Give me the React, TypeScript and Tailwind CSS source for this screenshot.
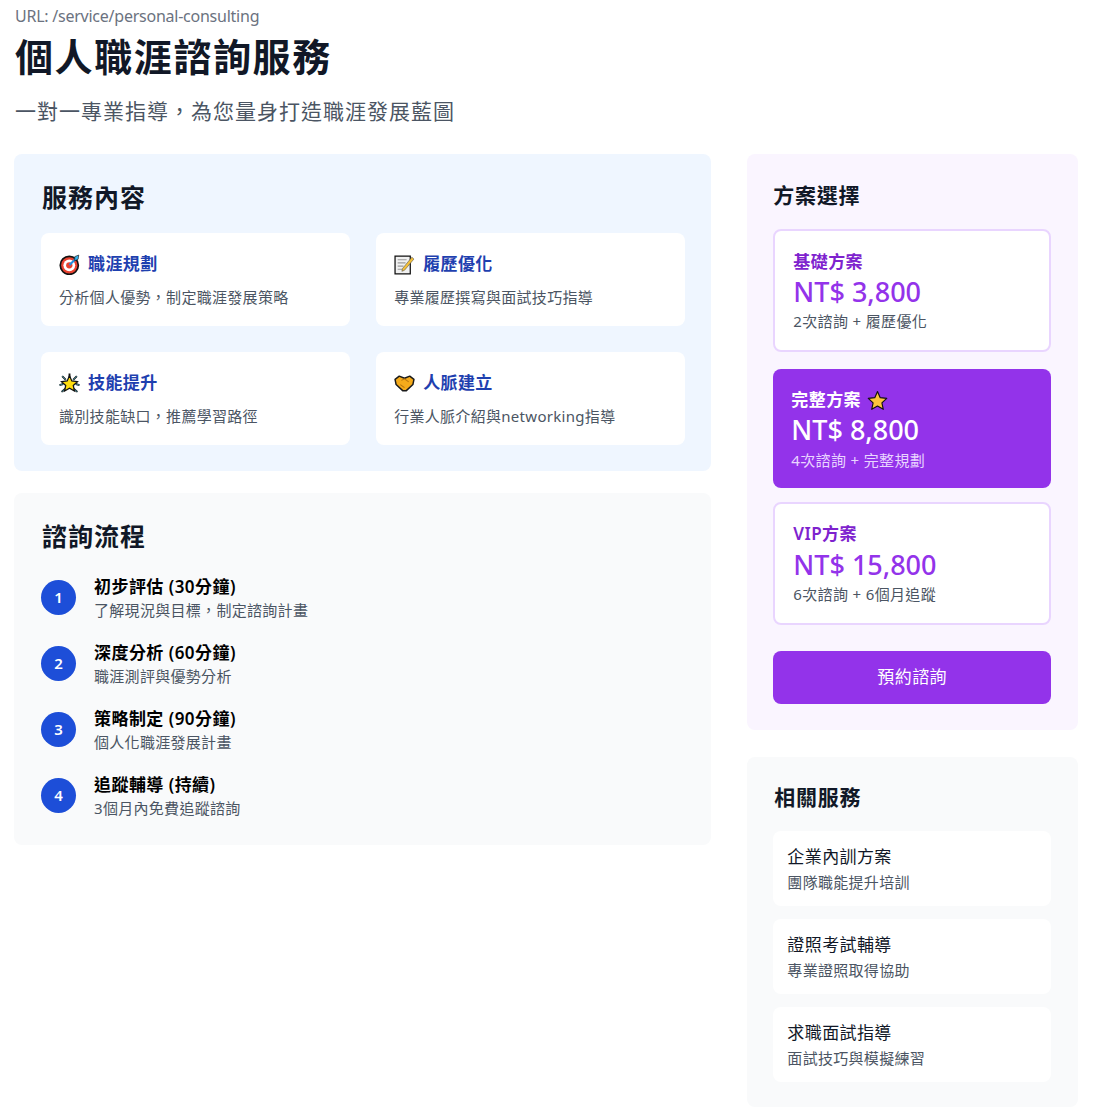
const services = [
  { icon: "target", title: "職涯規劃", desc: "分析個人優勢，制定職涯發展策略" },
  { icon: "memo", title: "履歷優化", desc: "專業履歷撰寫與面試技巧指導" },
  { icon: "star", title: "技能提升", desc: "識別技能缺口，推薦學習路徑" },
  { icon: "hands", title: "人脈建立", desc: "行業人脈介紹與networking指導" },
];

const steps = [
  { title: "初步評估 (30分鐘)", desc: "了解現況與目標，制定諮詢計畫" },
  { title: "深度分析 (60分鐘)", desc: "職涯測評與優勢分析" },
  { title: "策略制定 (90分鐘)", desc: "個人化職涯發展計畫" },
  { title: "追蹤輔導 (持續)", desc: "3個月內免費追蹤諮詢" },
];

const related = [
  { title: "企業內訓方案", desc: "團隊職能提升培訓" },
  { title: "證照考試輔導", desc: "專業證照取得協助" },
  { title: "求職面試指導", desc: "面試技巧與模擬練習" },
];

const Emoji = ({ name }: { name: string }) => {
  if (name === "target")
    return (
      <svg viewBox="0 0 20 20" className="w-[21px] h-[21px] shrink-0">
        <circle cx="9.8" cy="10.8" r="8.6" fill="#e8412f" stroke="#111" strokeWidth="1.6" />
        <circle cx="9.8" cy="10.8" r="5.6" fill="#fff" />
        <circle cx="9.8" cy="10.8" r="3" fill="#e8412f" />
        <path d="M10 10.5 17 3.5" stroke="#1d8fe0" strokeWidth="2" />
        <path d="M15 2.5 18.8 1 18.2 5 15 6.5Z" fill="#35b4f0" stroke="#111" strokeWidth="0.6" />
      </svg>
    );
  if (name === "memo")
    return (
      <svg viewBox="0 0 20 20" className="w-[21px] h-[21px] shrink-0">
        <path d="M1 2H15.5V19H1Z" fill="#f1f1f1" stroke="#111" strokeWidth="1.2" />
        <path d="M3.5 5.5H12M3.5 8.5H11M3.5 11.5H9M3.5 14.5H8" stroke="#9a9a9a" strokeWidth="1.1" />
        <path d="M8 14 17 3 19 4.8 10 15.5 7.5 16.5Z" fill="#f4c03a" stroke="#444" strokeWidth="0.5" />
      </svg>
    );
  if (name === "star")
    return (
      <svg viewBox="0 0 20 20" className="w-[21px] h-[21px] shrink-0">
        <path
          d="M10 0.5V5M3 3 6.5 6.5M17 3 13.5 6.5M0.5 11.5 4 10.5M19.5 11.5 16 10.5M2.5 18 6 15M17.5 18 14 15"
          stroke="#111"
          strokeWidth="1.8"
          fill="none"
        />
        <path d="M3 3 6.5 6.5M17 3 13.5 6.5M0.5 11.5 4 10.5M19.5 11.5 16 10.5M2.5 18 6 15M17.5 18 14 15" stroke="#3f8fa0" strokeWidth="0.8" />
        <path d="M10 2.5 12.2 7.6 17.6 8.2 13.6 11.9 14.7 17.2 10 14.5 5.3 17.2 6.4 11.9 2.4 8.2 7.8 7.6Z" fill="#ffdd0f" stroke="#111" strokeWidth="1.2" />
      </svg>
    );
  return (
    <svg viewBox="0 0 20 20" className="w-[21px] h-[21px] shrink-0">
      <path
        d="M1 6 5 3 10 5 15 3 19 6 18 11 11.5 17 8.5 17 2 11Z"
        fill="#f5ab1b"
        stroke="#1a1a1a"
        strokeWidth="1.4"
        strokeLinejoin="round"
      />
      <path d="M7 7 10 5.5 14 8.5M6 11 10 14" stroke="#b9770e" strokeWidth="1" fill="none" />
    </svg>
  );
};

const StarIcon = () => (
  <svg viewBox="0 0 20 20" className="w-[21px] h-[21px] shrink-0">
    <path
      d="M10 1.5 12.6 7.3 18.8 8 14.2 12.2 15.5 18.4 10 15.2 4.5 18.4 5.8 12.2 1.2 8 7.4 7.3Z"
      fill="#fdc33c"
      stroke="#111"
      strokeWidth="1.1"
      strokeLinejoin="round"
    />
  </svg>
);

const App = () => {
  return (
    <div className="pl-[14px] pr-[15px] pt-[7px] bg-white text-[#111827] font-['Noto_Sans','Noto_Sans_CJK_TC',sans-serif]">
      <p className="pl-px text-base leading-[18px] tracking-[-0.015em] text-[#6b7280]">URL: /service/personal-consulting</p>
      <h1 className="mt-[11px] pl-[1px] text-[38px] leading-[40px] font-bold tracking-[1.6px]">個人職涯諮詢服務</h1>
      <p className="mt-[21px] pl-px text-[21px] leading-[28px] tracking-[1px] text-[#4b5563]">一對一專業指導，為您量身打造職涯發展藍圖</p>

      <div className="mt-[29px] grid grid-cols-3 gap-9">
        <div className="col-span-2 flex flex-col gap-[22px]">
          <section className="bg-[#eff6ff] rounded-lg pl-[27px] pr-[26px] pt-[26px] pb-[26px]">
            <h2 className="pl-px text-[25px] leading-[34px] font-semibold tracking-[1px]">服務內容</h2>
            <div className="mt-[19px] grid grid-cols-2 gap-[26px]">
              {services.map((s) => (
                <div key={s.title} className="bg-white rounded-lg px-[18px] py-[16px] h-[93px]">
                  <div className="flex items-center gap-[8px]">
                    <Emoji name={s.icon} />
                    <h3 className="text-[17px] leading-[30px] font-semibold tracking-[0.4px] text-[#1e40af]">{s.title}</h3>
                  </div>
                  <p className="mt-[8px] text-[15px] leading-[20px] tracking-[0.3px] text-[#4b5563]">{s.desc}</p>
                </div>
              ))}
            </div>
          </section>

          <section className="bg-[#f9fafb] rounded-lg p-[27px] pt-[26px] pb-[25px]">
            <h2 className="pl-px text-[25px] leading-[34px] font-semibold tracking-[1px]">諮詢流程</h2>
            <div className="mt-[21px] flex flex-col gap-[18px]">
              {steps.map((s, i) => (
                <div key={s.title} className="flex items-center gap-[18px]">
                  <div className="w-[35px] h-[35px] mb-[2px] rounded-full bg-[#1d4ed8] text-white flex items-center justify-center text-[15px] font-semibold">
                    {i + 1}
                  </div>
                  <div>
                    <h4 className="text-[17px] leading-[26px] font-semibold tracking-[0.45px] text-[#000]">{s.title}</h4>
                    <p className="-mt-px text-[15px] leading-[23px] tracking-[0.3px] text-[#4b5563]">{s.desc}</p>
                  </div>
                </div>
              ))}
            </div>
          </section>
        </div>

        <div className="flex flex-col gap-[27px]">
          <section className="bg-[#faf5ff] rounded-lg pl-[26px] pr-[27px] pt-[26px] pb-[26px]">
            <h2 className="text-[21px] leading-[30px] font-semibold tracking-[0.75px]">方案選擇</h2>
            <div className="mt-[19px] flex flex-col">
              <div className="bg-white border-2 border-[#e9d5ff] rounded-lg px-[18px] pt-[19px] h-[123px]">
                <h3 className="text-[17px] leading-[24px] font-semibold tracking-[0.4px] text-[#7e22ce]">基礎方案</h3>
                <p className="text-[27px] leading-[36px] font-medium text-[#9333ea]">NT$ 3,800</p>
                <p className="mt-px text-[15px] leading-[20px] tracking-[0.35px] text-[#4b5563]">2次諮詢 + 履歷優化</p>
              </div>
              <div className="mt-[17px] bg-[#9333ea] rounded-lg px-[18px] pt-[18px] h-[119px] text-white">
                <div className="flex items-center gap-[6px]">
                  <h3 className="text-[17px] leading-[26px] font-semibold tracking-[0.4px]">完整方案</h3>
                  <StarIcon />
                </div>
                <p className="-mt-px text-[27px] leading-[36px] font-medium">NT$ 8,800</p>
                <p className="mt-[2px] text-[15px] leading-[20px] tracking-[0.35px] text-[#e9d5ff]">4次諮詢 + 完整規劃</p>
              </div>
              <div className="mt-[14px] bg-white border-2 border-[#e9d5ff] rounded-lg px-[18px] pt-[18px] h-[123px]">
                <h3 className="text-[17px] leading-[24px] font-semibold tracking-[0.4px] text-[#7e22ce]">VIP方案</h3>
                <p className="mt-px text-[27px] leading-[36px] font-medium text-[#9333ea]">NT$ 15,800</p>
                <p className="mt-px text-[15px] leading-[20px] tracking-[0.35px] text-[#4b5563]">6次諮詢 + 6個月追蹤</p>
              </div>
            </div>
            <button className="mt-[26px] w-full h-[53px] pb-[2px] bg-[#9333ea] rounded-lg text-white text-[17px] tracking-[0.4px]">預約諮詢</button>
          </section>

          <section className="bg-[#f9fafb] rounded-lg pl-[26px] pr-[27px] pt-[26px] pb-[25px]">
            <h2 className="pl-px text-[21px] leading-[28px] font-semibold tracking-[0.75px]">相關服務</h2>
            <div className="mt-[20px] flex flex-col gap-[13px]">
              {related.map((r) => (
                <div key={r.title} className="bg-white rounded-lg px-[14px] pt-[12px] h-[75px]">
                  <h3 className="text-[17px] leading-[28px] font-normal tracking-[0.4px]">{r.title}</h3>
                  <p className="mt-px text-[15px] leading-[20px] tracking-[0.3px] text-[#4b5563]">{r.desc}</p>
                </div>
              ))}
            </div>
          </section>
        </div>
      </div>
    </div>
  );
};

export default App;
